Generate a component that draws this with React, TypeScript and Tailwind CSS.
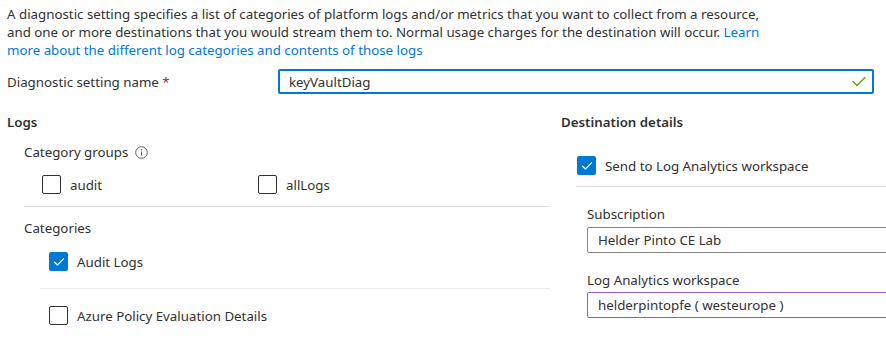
import React from "react";

const FONT = { fontFamily: '"Noto Sans", "Open Sans", sans-serif' };

function CheckBox({ checked }: { checked?: boolean }) {
  if (checked) {
    return (
      <span className="flex h-[19px] w-[19px] shrink-0 items-center justify-center rounded-[2px] bg-[#0078d4]">
        <svg width="12" height="10" viewBox="0 0 12 10" fill="none">
          <path d="M1.5 5.2 L4.4 8 L10.5 1.8" stroke="#ffffff" strokeWidth="1.2" strokeLinecap="round" strokeLinejoin="round" />
        </svg>
      </span>
    );
  }
  return <span className="block h-[19px] w-[19px] shrink-0 rounded-[2px] border border-[#323130] bg-white" />;
}

function CheckRow({ checked, label, className }: { checked?: boolean; label: string; className?: string }) {
  return (
    <div className={"flex items-center gap-[9px] " + (className ?? "")}>
      <CheckBox checked={checked} />
      <span>{label}</span>
    </div>
  );
}

export default function App() {
  return (
    <div
      className="relative h-[341px] w-[886px] overflow-hidden bg-white text-[13.3px] leading-[18px] text-[#323130]"
      style={FONT}
    >
      <div className="pl-[7px] pt-[5px]">
        <div>A diagnostic setting specifies a list of categories of platform logs and/or metrics that you want to collect from a resource,</div>
        <div>
          and one or more destinations that you would stream them to. Normal usage charges for the destination will occur.{" "}
          <span className="text-[#0078d4]">Learn</span>
        </div>
        <div className="text-[#0078d4]">more about the different log categories and contents of those logs</div>

        <div className="mt-[10px] flex items-center">
          <div className="w-[271px]">
            Diagnostic setting name <span className="text-[#a4262c]">*</span>
          </div>
          <div className="flex h-[25px] w-[596px] items-center justify-between rounded-[2px] border-2 border-[#0078d4] pl-[9px] pr-[6px]">
            <span>keyVaultDiag</span>
            <svg width="14" height="11" viewBox="0 0 14 11" fill="none">
              <path d="M1 5.5 L5 9.5 L13 1.5" stroke="#57a300" strokeWidth="1.3" strokeLinecap="round" strokeLinejoin="round" />
            </svg>
          </div>
        </div>

        <div className="mt-[19px] flex">
          {/* Left: Logs */}
          <div className="w-[543px] shrink-0">
            <div className="font-semibold">Logs</div>
            <div className="mt-[12px] pl-[17px]">
              <div className="flex items-center gap-[7px]">
                <span>Category groups</span>
                <svg width="13" height="13" viewBox="0 0 13 13" fill="none">
                  <circle cx="6.5" cy="6.5" r="5.8" stroke="#605e5c" strokeWidth="1" />
                  <line x1="6.5" y1="5.6" x2="6.5" y2="9.6" stroke="#605e5c" strokeWidth="1" />
                  <circle cx="6.5" cy="3.8" r="0.7" fill="#605e5c" />
                </svg>
              </div>
              <div className="mt-[14px] flex pl-[18px]">
                <CheckRow label="audit" className="w-[216px]" />
                <CheckRow label="allLogs" />
              </div>
              <div className="mt-[12px] h-px bg-[#e1dfdd]" />
              <div className="mt-[12px]">Categories</div>
              <div className="mt-[15px] pl-[25px]">
                <CheckRow checked label="Audit Logs" />
              </div>
              <div className="ml-[16px] mt-[17px] h-px bg-[#edebe9]" />
              <div className="mt-[17px] pl-[25px]">
                <CheckRow label="Azure Policy Evaluation Details" />
              </div>
            </div>
          </div>

          {/* Right: Destination */}
          <div className="ml-[11px] w-[340px] shrink-0">
            <div className="font-semibold">Destination details</div>
            <div className="mt-[25px] pl-[16px]">
              <CheckRow checked label="Send to Log Analytics workspace" />
            </div>
            <div className="ml-[15px] mt-[11px] h-px bg-[#e1dfdd]" />
            <div className="pl-[26px]">
              <div className="mt-[18px]">Subscription</div>
              <div className="mt-[4px] flex h-[26px] items-center rounded-[2px] border border-[#8a8886] pl-[10px]">
                Helder Pinto CE Lab
              </div>
              <div className="mt-[18px]">Log Analytics workspace</div>
              <div className="mt-[3px] flex h-[26px] items-center rounded-[2px] border border-[#8b5fc7] pl-[10px]">
                helderpintopfe ( westeurope )
              </div>
            </div>
          </div>
        </div>
      </div>
    </div>
  );
}
